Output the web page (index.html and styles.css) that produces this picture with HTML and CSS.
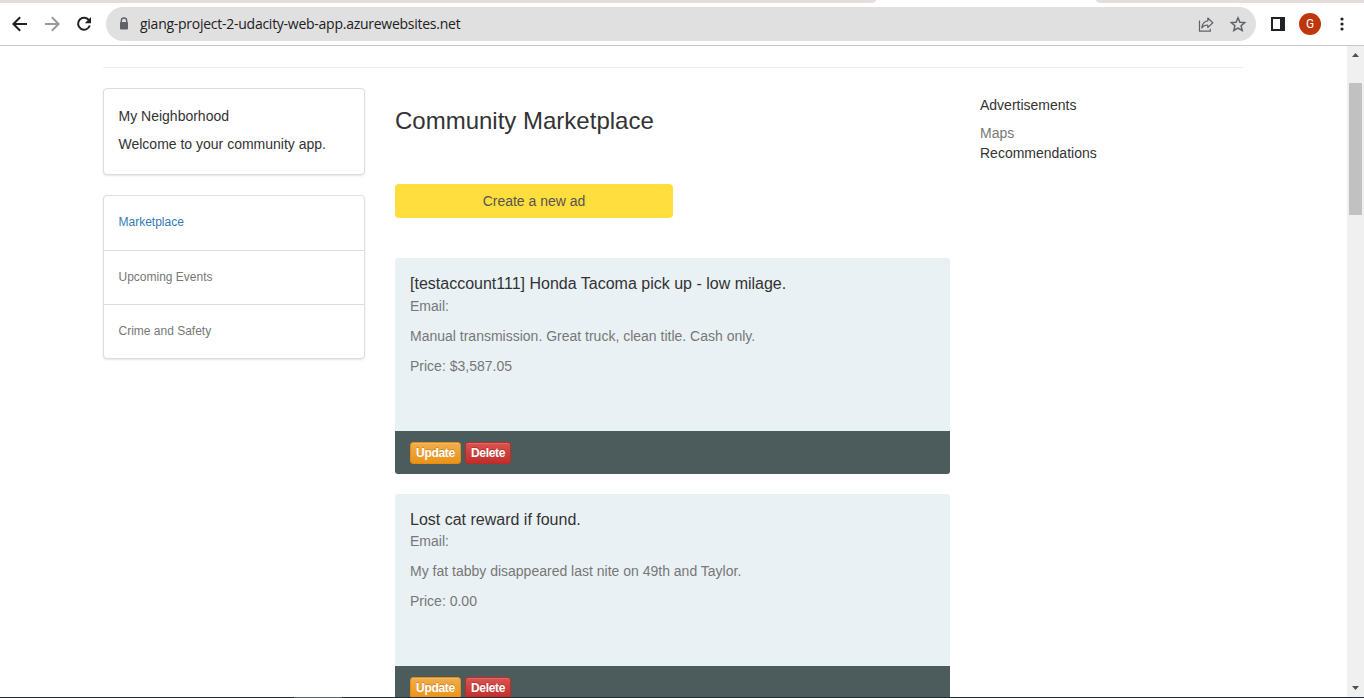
FILE: index.html
```html
<!DOCTYPE html>
<html lang="en">
<head>
<meta charset="utf-8">
<title>My Neighborhood</title>
<link rel="stylesheet" href="styles.css">
</head>
<body>
<div class="window">
  <div class="tabstrip"><div class="tabs-left"></div><div class="tab-active"></div><div class="tabs-right"></div></div>
  <header class="toolbar">
    <svg class="nav-icons" width="106" height="42" viewBox="0 0 106 42" fill="none" stroke-width="2">
      <path d="M27 21H14M20.200 14.200L13.400 21l6.800 6.800" stroke="#202124"/>
      <path d="M45 21h13M51.800 14.200L58.600 21l-6.800 6.800" stroke="#9a9a9a"/>
      <path d="M89.200 17.600A6 6 0 1 0 89.800 22.500" stroke="#202124"/>
      <path d="M91 14v6.200h-6.200z" fill="#202124"/>
    </svg>
    <div class="address">
      <svg class="lock" width="12" height="14" viewBox="0 0 12 14"><path d="M3.300 6V3.700a2.700 2.700 0 0 1 5.400 0V6" fill="none" stroke="#5f6368" stroke-width="1.400"/><rect x="2" y="5" width="8" height="7.500" rx="1" fill="#5f6368"/></svg>
      <span class="url">giang-project-2-udacity-web-app.azurewebsites.net</span>
      <svg class="page-actions" width="50" height="18" viewBox="0 0 50 18" fill="none" stroke="#5f6368">
        <path d="M2.500 5.500v10.700h10.800v-2.500" stroke-width="1.200"/>
        <path d="M10.800 3l5 4.800-5 4.800V10c-2.800 0-4.600.8-6 2.900.5-3.500 2.300-6.600 6-7z" stroke-width="1.200" stroke-linejoin="round"/>
        <path d="M41 2.800l1.900 4.400 4.800.4-3.600 3.200 1.100 4.700-4.200-2.500-4.200 2.500 1.100-4.700-3.600-3.200 4.800-.4z" stroke-width="1.500"/>
      </svg>
    </div>
    <svg class="side-icon" width="14" height="14" viewBox="0 0 14 14"><path d="M0 0h14v14H0z" fill="#202124"/><path d="M2 2h7v10H2z" fill="#fff"/></svg>
    <div class="avatar">G</div>
    <svg class="menu-icon" width="4" height="14" viewBox="0 0 4 14" fill="#202124"><circle cx="2" cy="2" r="1.600"/><circle cx="2" cy="7" r="1.600"/><circle cx="2" cy="12" r="1.600"/></svg>
  </header>
  <div class="viewport">
    <div class="page">
      <hr class="rule">
      <div class="columns">
        <aside class="sidebar">
          <section class="panel intro"><p>My Neighborhood</p><p>Welcome to your community app.</p></section>
          <nav class="panel links"><a class="active">Marketplace</a><a>Upcoming Events</a><a>Crime and Safety</a></nav>
        </aside>
        <main class="main">
          <h1>Community Marketplace</h1>
          <a class="create">Create a new ad</a>
          <article class="ad">
            <div class="ad-body"><h2>[testaccount111] Honda Tacoma pick up - low milage.</h2><p>Email:</p><p>Manual transmission. Great truck, clean title. Cash only.</p><p>Price: $3,587.05</p></div>
            <footer class="ad-footer"><button class="btn update">Update</button><button class="btn delete">Delete</button></footer>
          </article>
          <article class="ad">
            <div class="ad-body"><h2>Lost cat reward if found.</h2><p>Email:</p><p>My fat tabby disappeared last nite on 49th and Taylor.</p><p>Price: 0.00</p></div>
            <footer class="ad-footer"><button class="btn update">Update</button><button class="btn delete">Delete</button></footer>
          </article>
        </main>
        <aside class="extras"><p class="extras-title">Advertisements</p><p class="muted">Maps</p><p>Recommendations</p></aside>
      </div>
    </div>
    <div class="scrollbar">
      <svg width="7" height="4" viewBox="0 0 7 4"><path d="M0 4L3.500 0 7 4z" fill="#505050"/></svg>
      <div class="thumb"></div>
      <svg class="down" width="7" height="4" viewBox="0 0 7 4"><path d="M0 0h7L3.500 4z" fill="#505050"/></svg>
    </div>
  </div>
  <div class="taskbar"><div class="task"></div></div>
</div>
</body>
</html>
```
FILE: styles.css
```css
* { box-sizing: border-box; }
body { margin: 0; background: #fff; color: #333; font: 14px/20px "Liberation Sans", Arial, sans-serif; }
p, h1, h2 { margin: 0; font-weight: 400; }
.window { display: flex; flex-direction: column; height: 698px; overflow: hidden; }
.tabstrip { display: flex; flex: none; height: 3px; }
.tabs-left { width: 876px; background: #e4dcd8; border-bottom-right-radius: 5px 3px; }
.tab-active { width: 220px; }
.tabs-right { flex: 1; background: #e4dcd8; border-bottom-left-radius: 5px 3px; }
.toolbar { display: flex; flex: none; align-items: center; height: 43px; border-bottom: 1px solid #c9c9c9; }
.nav-icons { flex: none; }
.address { display: flex; flex: none; align-items: center; width: 1150px; height: 34px; border-radius: 17px; background: #e0e0e0; padding: 0 9px 0 12px; }
.url { flex: 1; margin-left: 10px; color: #202124; font: 14px/20px "Open Sans", "Noto Sans", sans-serif; letter-spacing: -0.26px; white-space: nowrap; }
.side-icon { margin-left: 15px; }
.avatar { width: 22px; height: 22px; margin-left: 14px; border-radius: 50%; background: #bf360c; color: #fff; font: 12px/22px Roboto, sans-serif; text-align: center; }
.menu-icon { margin-left: 19px; }
.viewport { display: flex; flex: none; height: 651px; overflow: hidden; }
.page { flex: 1; padding: 21px 0 0 103px; }
.rule { width: 1140px; height: 1px; margin: 0 0 20px; border: 0; background: #eee; }
.columns { display: flex; }
.sidebar { width: 262px; }
.panel { border: 1px solid #ddd; border-radius: 4px; background: #fff; box-shadow: 0 1px 2px rgba(0,0,0,.1); }
.intro { height: 87px; padding: 17px 14.5px 0; }
.intro p { margin-bottom: 8px; }
.links { margin-top: 20px; font-size: 12px; }
.links a { display: flex; align-items: center; height: 54px; padding: 0 14.5px 1px; border-bottom: 1px solid #ddd; color: #777; }
.links a:first-child { height: 55px; padding-bottom: 3px; }
.links a:last-child { border: 0; height: 53px; }
.links .active { color: #337ab7; }
.main { width: 555px; margin-left: 30px; padding-top: 20px; }
h1 { height: 76px; font-size: 24px; line-height: 26px; }
.create { display: block; width: 278px; height: 34px; margin-bottom: 40.1px; border-radius: 4px; background: #ffde3d; color: #555; line-height: 34px; text-align: center; }
.ad { margin-bottom: 20px; border-radius: 3px; overflow: hidden; }
.ad-body { height: 172.6px; padding: 15px; background: #e9f1f5; color: #777; }
h2 { margin-bottom: 0.7px; color: #333; font-size: 16px; line-height: 22px; }
.ad-body p { margin-bottom: 10px; }
.ad-footer { display: flex; gap: 4px; height: 43px; padding: 11px 15px; background: #4c5c5c; }
.btn { height: 22px; padding: 0; border: 1px solid; border-radius: 3px; color: #fff; font: 700 12px/18px "Liberation Sans", Arial, sans-serif; letter-spacing: -0.3px; text-shadow: 0 -1px 0 rgba(0,0,0,.2); box-shadow: inset 0 1px 0 rgba(255,255,255,.15); }
.update { width: 51px; border-color: #e38d13; background: linear-gradient(#f0ad4e, #eb9316); }
.delete { width: 46px; border-color: #b92c28; background: linear-gradient(#d9534f, #c12e2a); }
.extras { margin-left: 30px; padding-top: 7px; }
.extras-title { margin-bottom: 8px; }
.muted { color: #777; }
.scrollbar { display: flex; flex-direction: column; align-items: center; width: 17px; padding: 7px 0; background: #f0f0f0; }
.thumb { width: 13px; height: 132px; margin-top: 26px; background: #c1c1c1; }
.down { margin-top: auto; }
.taskbar { flex: none; height: 1px; padding-left: 294px; background: #202d38; }
.task { width: 48px; height: 1px; background: #56656a; }
```
